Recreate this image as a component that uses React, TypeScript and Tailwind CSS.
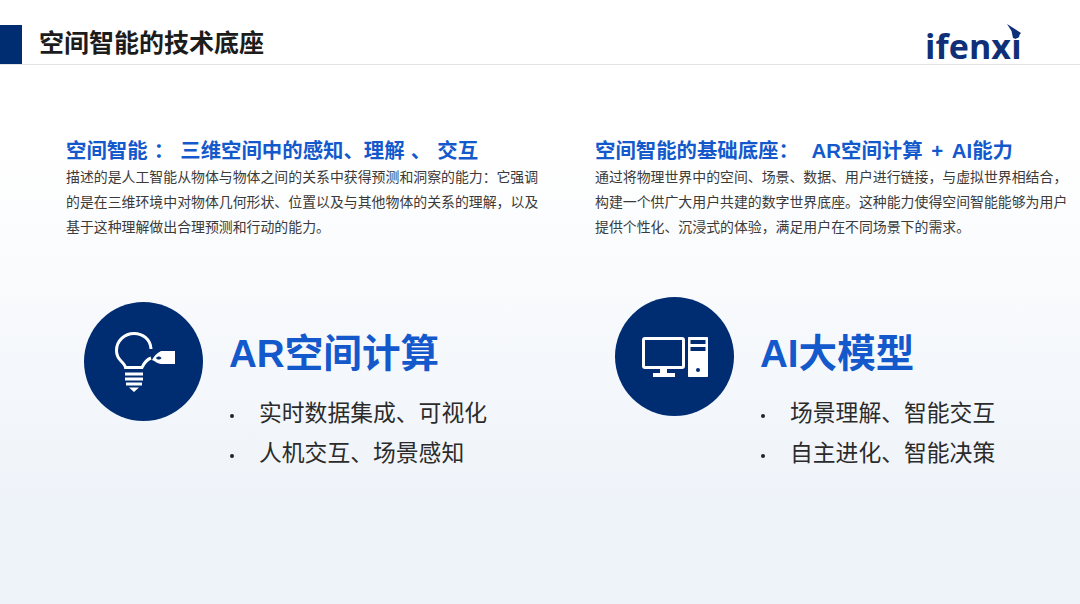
const cjk = "font-['Liberation_Sans','Noto_Sans_CJK_SC',sans-serif]";

function BulbIcon() {
  return (
    <svg width="60" height="60" viewBox="0 0 60 60" fill="none" className="block">
      <path d="M36 17C35.5 7.5 28 1.5 19 1.5C9.5 1.5 1.5 9 1.5 18.5C1.5 23 3.5 26.5 6 29C8 31 10 33 10.5 35.5H27C29 31 31 28 36 26" stroke="white" strokeWidth="3" />
      <path fillRule="evenodd" clipRule="evenodd" d="M46 19H60V32H46C43 32 40 29 37 28C39 24 42 21 46 19ZM41 26C42.5 24 45 24 46.5 26C45 28 42.5 28 41 26Z" fill="white" />
      <path d="M10 40.5H28V43.5H10ZM10 45.5H28V48.5H10ZM11 50.5H27V53.5H11ZM14 55.5H24L19 60Z" fill="white" />
    </svg>
  );
}

function ComputerIcon() {
  return (
    <svg width="66" height="40" viewBox="0 0 66 40" fill="none" className="block">
      <rect x="1.5" y="1.5" width="40" height="29" rx="1.5" stroke="white" strokeWidth="3" />
      <path d="M18 32H25V36H33V40H11V36H18Z" fill="white" />
      <path fillRule="evenodd" clipRule="evenodd" d="M47 0H65C65.6 0 66 .4 66 1V39C66 39.6 65.6 40 65 40H47C46.4 40 46 39.6 46 39V1C46 .4 46.4 0 47 0ZM48.5 3V7H63.5V3ZM48.5 10V14H63.5V10ZM56 31A2 2 0 1 0 56 35A2 2 0 1 0 56 31Z" fill="white" />
    </svg>
  );
}

function Logo() {
  return (
    <div className="relative w-[96px] h-[40px] mt-[7px]">
      <span className="absolute left-[-2px] top-[-3px] text-[34px] leading-[48px] font-bold tracking-[0.1px] text-[#0f2f78] font-['Open_Sans',sans-serif]">ifenxi</span>
      <svg width="16" height="20" viewBox="0 0 16 20" className="absolute left-[80px] top-[-1px]">
        <path d="M0 0L14 9L9 15L6 14L4.5 7Z" fill="#0f2f78" />
      </svg>
    </div>
  );
}

function Intro({ heading, lines }: { heading: React.ReactNode; lines: string[] }) {
  return (
    <div className="w-[480px]">
      <h2 className="text-[20.4px] leading-[28px] font-bold text-[#1459cc] whitespace-pre">{heading}</h2>
      <div className="text-[13.9px] leading-[25px] text-[#3a3a3a]">
        {lines.map((l) => (
          <p key={l} className="whitespace-pre [word-spacing:-4px]">{l}</p>
        ))}
      </div>
    </div>
  );
}

function Feature({ icon, title, items, circleClass }: { icon: React.ReactNode; title: string; items: string[]; circleClass: string }) {
  return (
    <div className="flex items-start">
      <div className={`w-[119px] h-[119px] rounded-full bg-[#002d72] flex items-center justify-center shrink-0 ${circleClass}`}>{icon}</div>
      <div className="ml-[26px] mt-[32px]">
        <div className="text-[38.6px] leading-[50px] font-bold text-[#1459cc]">{title}</div>
        <ul className="mt-[18px] flex flex-col gap-[8px]">
          {items.map((t) => (
            <li key={t} className="flex items-center h-[32px] text-[22.8px] leading-[32px] text-[#2b2b2b]">
              <span className="w-[4px] h-[4px] rounded-full bg-[#222] ml-[1px] mr-[25px] mt-[5px]" />
              {t}
            </li>
          ))}
        </ul>
      </div>
    </div>
  );
}

export default function App() {
  return (
    <div className={`w-[1080px] h-[604px] overflow-hidden bg-gradient-to-b from-white from-[25%] to-[#eef3f9] to-[85%] ${cjk}`}>
      <header className="h-[65px] flex bg-white border-b border-[#e3e3e3]">
        <div className="w-[22px] h-[39px] mt-[25px] bg-[#002d72]" />
        <h1 className="ml-[17px] mt-[25px] text-[25px] leading-[36px] font-bold text-[#1c1c1c]">空间智能的技术底座</h1>
        <div className="ml-auto mr-[57px] mt-[18px]"><Logo /></div>
      </header>
      <main className="pl-[66px] pt-[72px]">
        <div className="grid grid-cols-[529px_1fr]">
          <Intro
            heading={<span className="[word-spacing:0.5px]">空间智能 ： 三维空间中的感知、理解 、 交互</span>}
            lines={[
              "描述的是人工智能从物体与物体之间的关系中获得预测和洞察的能力： 它强调",
              "的是在三维环境中对物体几何形状、位置以及与其他物体的关系的理解，以及",
              "基于这种理解做出合理预测和行动的能力。",
            ]}
          />
          <Intro
            heading={
              <span className="[word-spacing:3px]">
                空间智能的基础底座：<span className="ml-[4px]"> AR空间计算 + AI能力</span>
              </span>
            }
            lines={[
              "通过将物理世界中的空间、场景、数据、用户进行链接，与虚拟世界相结合，",
              "构建一个供广大用户共建的数字世界底座。这种能力使得空间智能能够为用户",
              "提供个性化、沉浸式的体验，满足用户在不同场景下的需求。",
            ]}
          />
        </div>
        <div className="grid grid-cols-[529px_1fr] mt-[57px]">
          <div className="pl-[18px]">
            <Feature circleClass="mt-[5px] pl-[3px]" icon={<BulbIcon />} title="AR空间计算" items={["实时数据集成、可视化", "人机交互、场景感知"]} />
          </div>
          <div className="pl-[20px]">
            <Feature circleClass="" icon={<ComputerIcon />} title="AI大模型" items={["场景理解、智能交互", "自主进化、智能决策"]} />
          </div>
        </div>
      </main>
    </div>
  );
}
